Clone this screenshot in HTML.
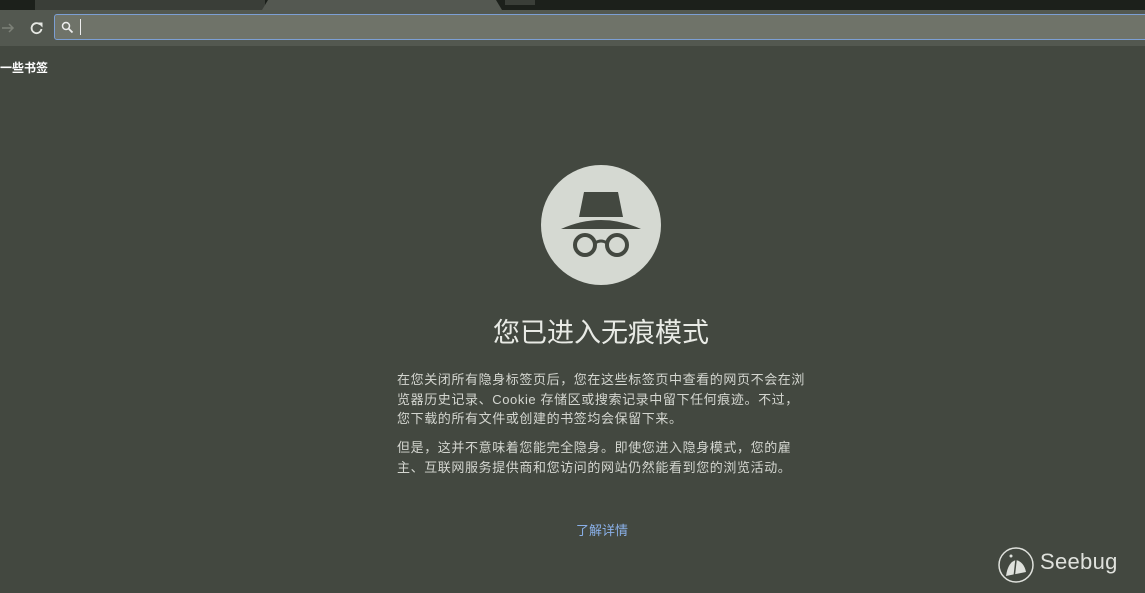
<!DOCTYPE html>
<html><head><meta charset="utf-8"><style>
body{margin:0;width:1145px;height:593px;background:#434840;overflow:hidden;font-family:"Liberation Sans","Noto Sans CJK SC",sans-serif;position:relative}
.top{position:absolute;left:0;top:0;width:1145px;height:10px;background:#1c201b}
.tab1{position:absolute;left:35px;top:0;width:230px;height:10px;background:#3a3e38}
.tab2{position:absolute;left:262px;top:0;width:240px;height:10px;background:#545851;clip-path:polygon(6px 0,234px 0,240px 100%,0 100%)}
.tab3{position:absolute;left:505px;top:0;width:30px;height:5px;background:#3a3e38}
.bar{position:absolute;left:0;top:10px;width:1145px;height:36px;background:#535850}
.omni{position:absolute;left:54px;top:14px;width:1100px;height:26px;box-sizing:border-box;border:1px solid #7c9fd4;border-radius:3px;background:#6f7369}
.bm{position:absolute;left:0;top:59px;color:#fff;font-size:12px;font-weight:bold}
.c{position:absolute;left:541px;top:165px;width:120px;height:120px;border-radius:50%;background:#d5d9d2}
h1{position:absolute;left:0;width:1202px;top:311px;margin:0;text-align:center;font-weight:normal;font-size:27px;color:#e8eae5}
.p{position:absolute;left:397px;width:500px;white-space:nowrap;color:#d4d6d0;font-size:13px;letter-spacing:0.6px;line-height:19.5px;margin:0}
.lk{position:absolute;left:576px;top:520px;color:#8ab0e8;font-size:13px}
.sb{position:absolute;left:1040px;top:549px;color:#dfe1dc;font-size:22px;letter-spacing:0.3px}
</style></head><body>
<div class="top"></div><div class="tab1"></div><div class="tab2"></div><div class="tab3"></div>
<div class="bar"></div>
<svg style="position:absolute;left:0;top:18px" width="50" height="20"><path d="M2 10H13M9 6l4 4-4 4" stroke="#7d8178" stroke-width="1.5" fill="none"/><path d="M40 6.5a5 5 0 1 0 1.5 4.5" stroke="#e6e8e3" stroke-width="1.8" fill="none"/><path d="M37.5 4.5h5v5z" fill="#e6e8e3"/></svg>
<div class="omni"></div>
<svg style="position:absolute;left:60px;top:20px" width="16" height="16"><circle cx="6" cy="6" r="3.5" stroke="#eee" stroke-width="1.5" fill="none"/><path d="M8.5 8.5l4 4" stroke="#eee" stroke-width="1.8"/></svg>
<div style="position:absolute;left:80px;top:19px;width:1px;height:16px;background:#eee"></div>
<div class="bm">一些书签</div>
<div class="c"></div>
<svg style="position:absolute;left:541px;top:165px" width="120" height="120"><path d="M43 27h34l5 25H38z" fill="#434840"/><path d="M20 64q40-18 80 0z" fill="#434840"/><circle cx="44" cy="80" r="10" stroke="#434840" stroke-width="4" fill="none"/><circle cx="76" cy="80" r="10" stroke="#434840" stroke-width="4" fill="none"/><path d="M54 78q6-4 12 0" stroke="#434840" stroke-width="3" fill="none"/></svg>
<h1>您已进入无痕模式</h1>
<p class="p" style="top:370px">在您关闭所有隐身标签页后，您在这些标签页中查看的网页不会在浏<br>览器历史记录、Cookie 存储区或搜索记录中留下任何痕迹。不过，<br>您下载的所有文件或创建的书签均会保留下来。</p>
<p class="p" style="top:438px">但是，这并不意味着您能完全隐身。即使您进入隐身模式，您的雇<br>主、互联网服务提供商和您访问的网站仍然能看到您的浏览活动。</p>
<div class="lk">了解详情</div>
<svg style="position:absolute;left:997px;top:546px" width="40" height="40"><circle cx="19" cy="19" r="17" stroke="#dfe1dc" stroke-width="1.5" fill="none"/><path d="M9 30q2-14 10-16q8 2 10 12z" fill="#dfe1dc"/><path d="M19 14l-2 18" stroke="#434840" stroke-width="1.5"/><circle cx="14" cy="10" r="1.5" fill="#dfe1dc"/></svg>
<div class="sb">Seebug</div>
</body></html>
